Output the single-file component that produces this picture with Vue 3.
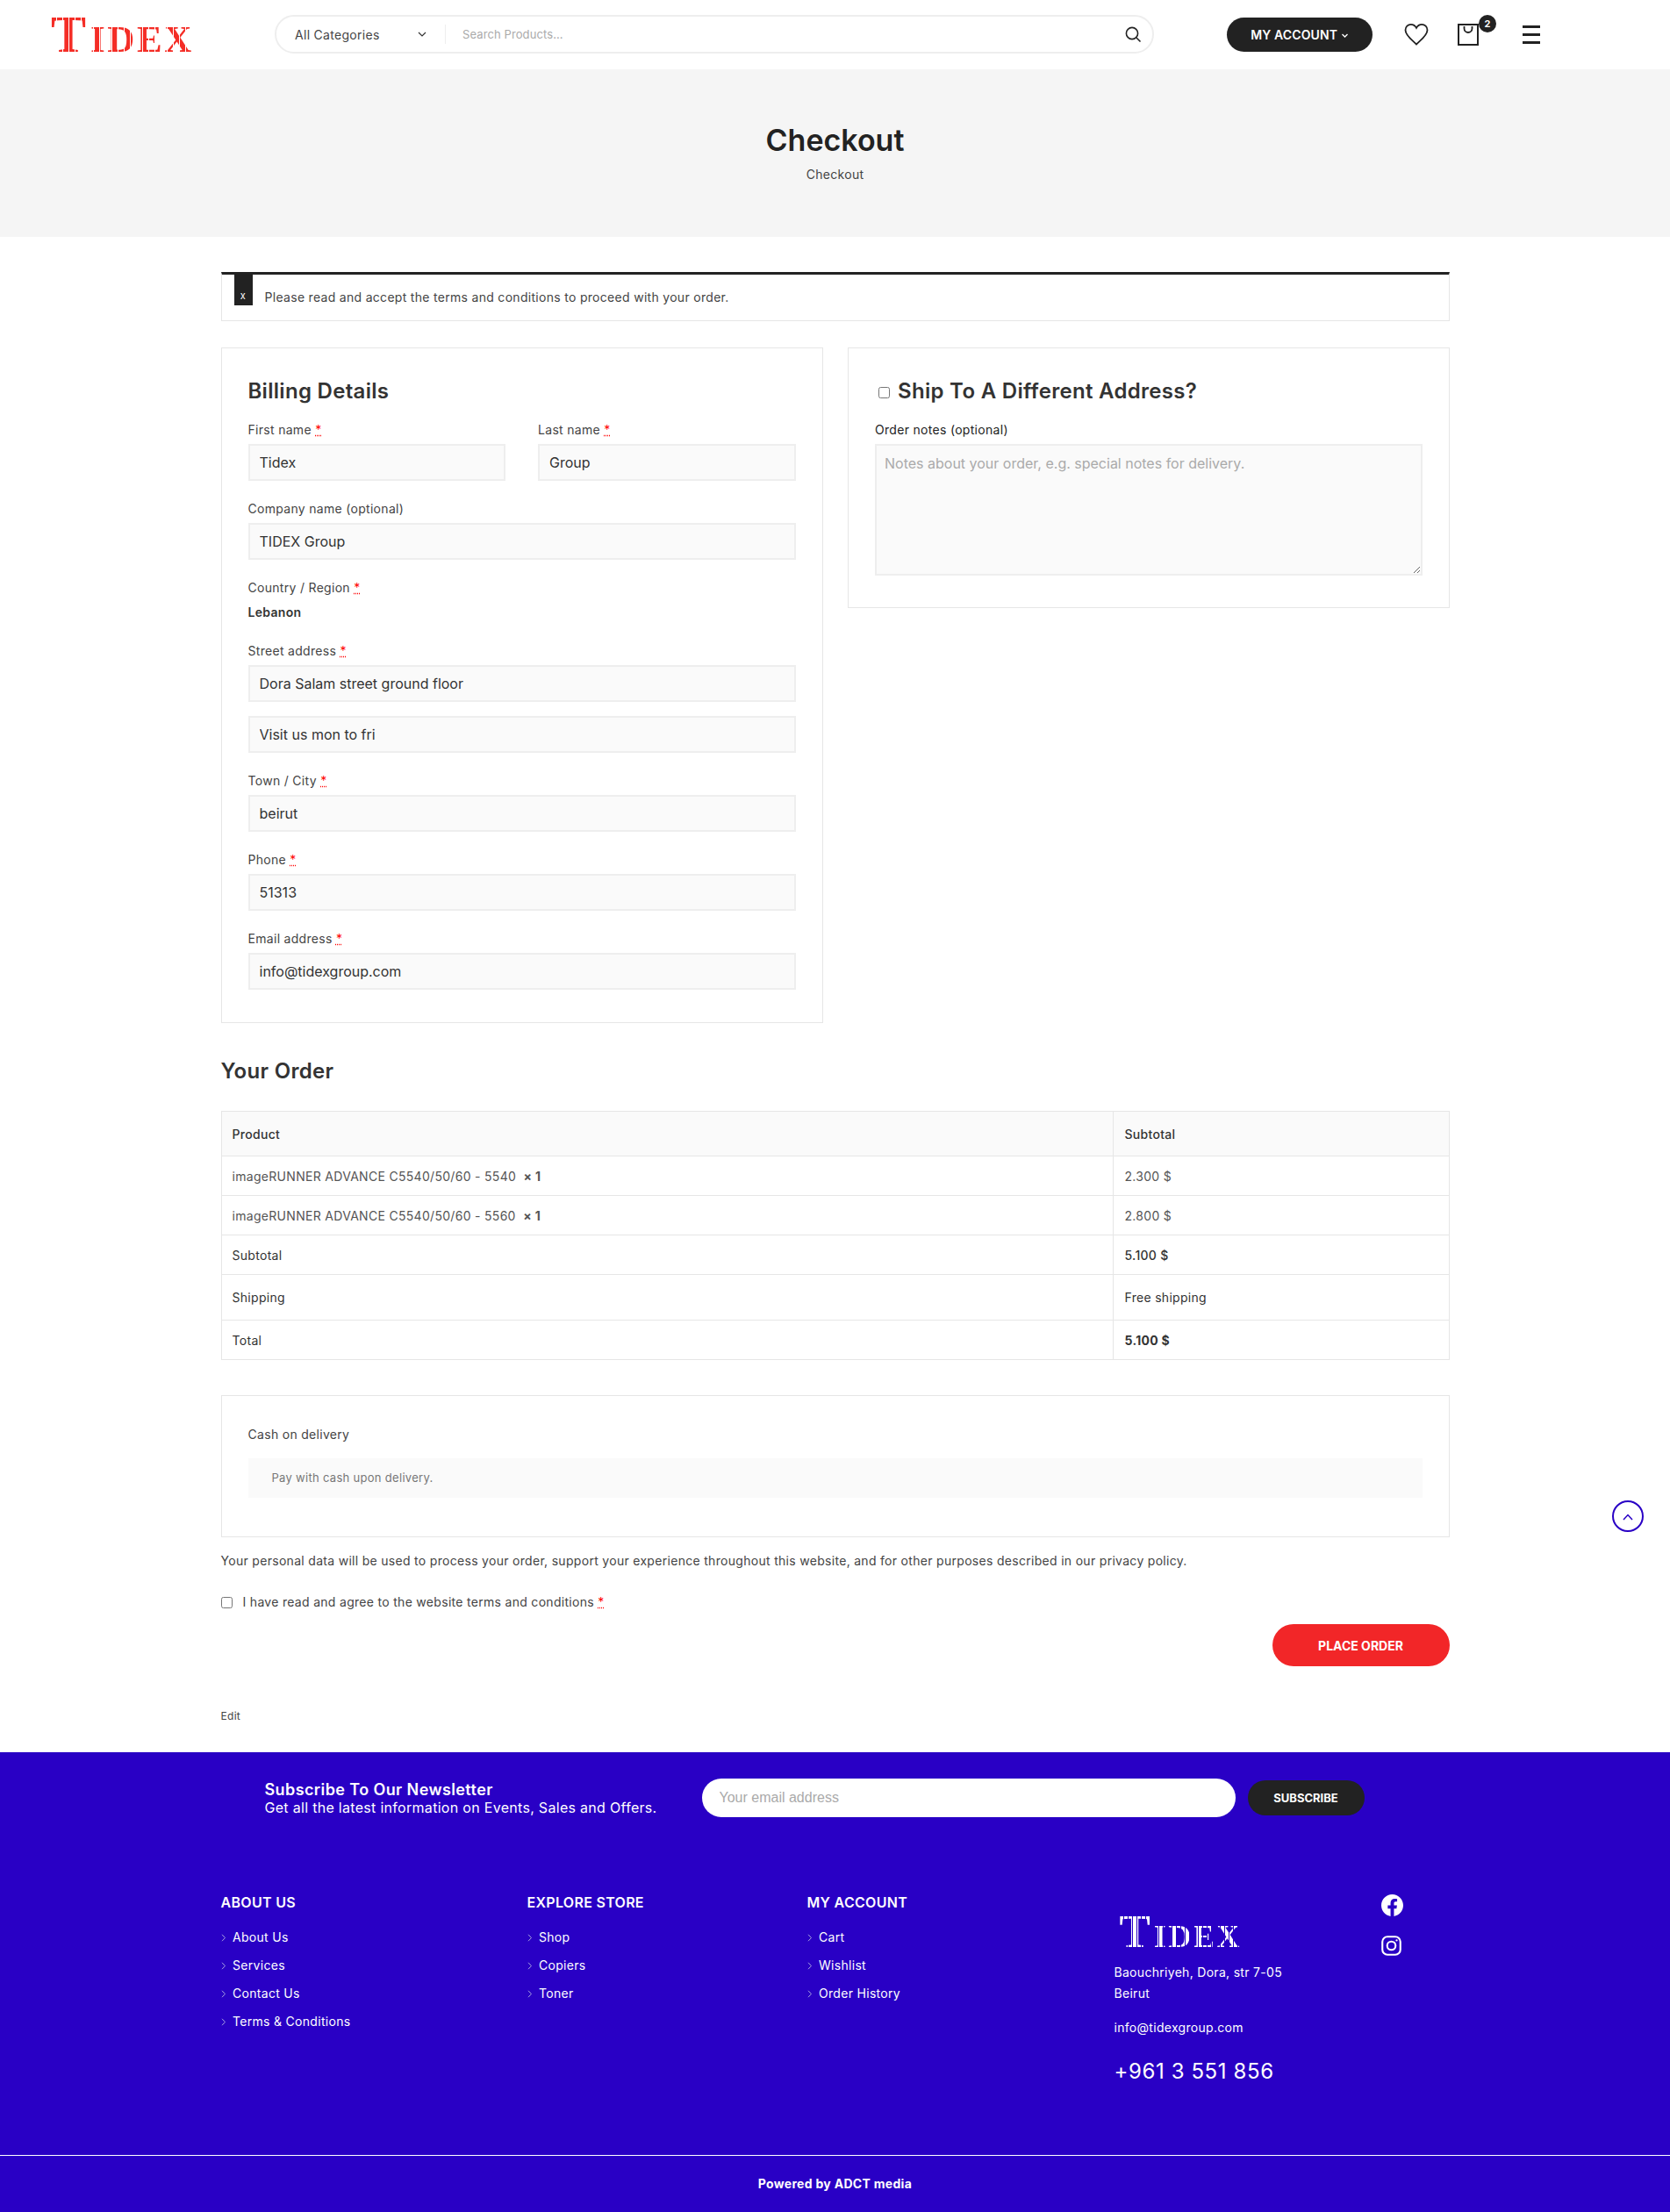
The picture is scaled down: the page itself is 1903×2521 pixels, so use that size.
<script setup>
const topFields = [
  { label: 'Company name (optional)', value: 'TIDEX Group' },
]
const lowerFields = [
  { label: 'Town / City', value: 'beirut' },
  { label: 'Phone', value: '51313' },
  { label: 'Email address', value: 'info@tidexgroup.com' },
]
const rows = [
  { name: 'imageRUNNER ADVANCE C5540/50/60 - 5540', price: '2.300 $' },
  { name: 'imageRUNNER ADVANCE C5540/50/60 - 5560', price: '2.800 $' },
]
const footerCols = [
  { title: 'ABOUT US', links: ['About Us', 'Services', 'Contact Us', 'Terms & Conditions'] },
  { title: 'EXPLORE STORE', links: ['Shop', 'Copiers', 'Toner'] },
  { title: 'MY ACCOUNT', links: ['Cart', 'Wishlist', 'Order History'] },
]
</script>

<template>
  <div class="page">
    <header class="topbar">
      <div class="logo-cell"><div class="logo"><span class="big">T</span>IDEX</div></div>
      <div class="search">
        <div class="cat">
          <span>All Categories</span>
          <svg width="12" height="12" viewBox="0 0 12 12"><path d="M2 4l4 4 4-4" fill="none" stroke="#333" stroke-width="1.2" /></svg>
        </div>
        <input class="search-input" type="text" placeholder="Search Products..." />
        <svg class="search-icon" width="20" height="20" viewBox="0 0 20 20" fill="none" stroke="#222" stroke-width="1.6">
          <circle cx="9" cy="9" r="6.6" />
          <path d="M14 14l4.5 4.5" />
        </svg>
      </div>
      <button class="account">MY ACCOUNT
        <svg width="9" height="9" viewBox="0 0 12 12"><path d="M2 4l4 4 4-4" fill="none" stroke="#fff" stroke-width="1.8" /></svg>
      </button>
      <svg class="heart" width="28" height="26" viewBox="0 0 28 26" fill="none" stroke="#222" stroke-width="1.8">
        <path d="M14 24.500C9 19.500 1.500 14.500 1.500 8.300 1.500 4.500 4.400 1.800 7.700 1.800c2.700 0 5 1.500 6.300 4 1.300-2.500 3.600-4 6.300-4 3.300 0 6.200 2.700 6.200 6.500C26.500 14.500 19 19.500 14 24.500z" />
      </svg>
      <div class="cart">
        <svg width="24" height="25" viewBox="0 0 24 25" fill="none" stroke="#222">
          <rect x="1" y="1" width="22" height="23" stroke-width="2" />
          <path d="M7.500 3v2.500a4.500 4.500 0 0 0 9 0V3" stroke-width="1.800" />
        </svg>
        <span class="badge">2</span>
      </div>
      <div class="burger"><i></i><i></i><i></i></div>
    </header>

    <section class="banner">
      <h1>Checkout</h1>
      <div class="crumb">Checkout</div>
    </section>

    <main class="wrap">
      <div class="notice">
        <span class="close">x</span>
        <span class="notice-text">Please read and accept the terms and conditions to proceed with your order.</span>
      </div>

      <div class="columns">
        <section class="box billing">
          <h3>Billing Details</h3>
          <div class="pair">
            <div class="field">
              <label>First name <abbr title="required">*</abbr></label>
              <input type="text" value="Tidex" />
            </div>
            <div class="field">
              <label>Last name <abbr title="required">*</abbr></label>
              <input type="text" value="Group" />
            </div>
          </div>
          <div class="field" v-for="f in topFields" :key="f.label">
            <label>{{ f.label }}</label>
            <input type="text" :value="f.value" />
          </div>
          <div class="field">
            <label>Country / Region <abbr title="required">*</abbr></label>
            <strong class="country">Lebanon</strong>
          </div>
          <div class="field">
            <label>Street address <abbr title="required">*</abbr></label>
            <input type="text" value="Dora Salam street ground floor" />
            <input class="second" type="text" value="Visit us mon to fri" />
          </div>
          <div class="field" v-for="f in lowerFields" :key="f.label">
            <label>{{ f.label }} <abbr title="required">*</abbr></label>
            <input type="text" :value="f.value" />
          </div>
        </section>

        <section class="box ship">
          <h3><input type="checkbox" class="ship-check" />Ship To A Different Address?</h3>
          <div class="field">
            <label class="dark">Order notes (optional)</label>
            <textarea placeholder="Notes about your order, e.g. special notes for delivery."></textarea>
          </div>
        </section>
      </div>

      <h3 class="order-title">Your Order</h3>
      <table class="order">
        <thead>
          <tr><th>Product</th><th>Subtotal</th></tr>
        </thead>
        <tbody>
          <tr v-for="r in rows" :key="r.name" class="item">
            <td class="muted">{{ r.name }}&nbsp; <strong>× 1</strong></td>
            <td class="muted">{{ r.price }}</td>
          </tr>
        </tbody>
        <tfoot>
          <tr><td>Subtotal</td><td class="medium">5.100 $</td></tr>
          <tr class="tall"><td>Shipping</td><td>Free shipping</td></tr>
          <tr><td>Total</td><td><strong>5.100 $</strong></td></tr>
        </tfoot>
      </table>

      <div class="payment">
        <div class="pay-name">Cash on delivery</div>
        <div class="pay-note">Pay with cash upon delivery.</div>
      </div>

      <p class="privacy">Your personal data will be used to process your order, support your experience throughout this website, and for other purposes described in our privacy policy.</p>
      <div class="terms">
        <input type="checkbox" />
        <span>I have read and agree to the website terms and conditions <abbr title="required">*</abbr></span>
      </div>
      <div class="place-row"><button class="place">PLACE ORDER</button></div>
      <div class="edit">Edit</div>
    </main>

    <footer class="footer">
      <div class="wrap">
        <div class="news">
          <div class="news-text">
            <div class="news-title">Subscribe To Our Newsletter</div>
            <div class="news-sub">Get all the latest information on Events, Sales and Offers.</div>
          </div>
          <input class="news-input" type="text" placeholder="Your email address" />
          <button class="news-btn">SUBSCRIBE</button>
        </div>

        <div class="foot-grid">
          <div v-for="c in footerCols" :key="c.title">
            <h4>{{ c.title }}</h4>
            <ul>
              <li v-for="l in c.links" :key="l">
                <svg width="6" height="9" viewBox="0 0 6 9"><path d="M1 .8l3.500 3.700L1 8.200" fill="none" stroke="#a99fe0" stroke-width="1" /></svg>
                {{ l }}
              </li>
            </ul>
          </div>
          <div class="contact">
            <div class="logo logo-white"><span class="big">T</span>IDEX</div>
            <div>Baouchriyeh, Dora, str 7-05</div>
            <div>Beirut</div>
            <div class="mail">info@tidexgroup.com</div>
            <div class="phone">+961 3 551 856</div>
          </div>
          <div class="social">
            <svg width="25" height="25" viewBox="0 0 24 24" fill="#fff">
              <path d="M24 12.073c0-6.627-5.373-12-12-12s-12 5.373-12 12c0 5.990 4.388 10.954 10.125 11.854v-8.385H7.078v-3.470h3.047V9.430c0-3.007 1.792-4.669 4.533-4.669 1.312 0 2.686.235 2.686.235v2.953H15.830c-1.491 0-1.956.925-1.956 1.874v2.250h3.328l-.532 3.470h-2.796v8.385C19.612 23.027 24 18.062 24 12.073z" />
            </svg>
            <svg width="23" height="23" viewBox="0 0 24 24" fill="none" stroke="#fff" stroke-width="2.200">
              <rect x="1.300" y="1.300" width="21.400" height="21.400" rx="6" />
              <circle cx="12" cy="12" r="5" />
              <circle cx="18.300" cy="5.700" r="1.200" fill="#fff" stroke="none" />
            </svg>
          </div>
        </div>
      </div>
      <div class="powered">Powered by ADCT media</div>
    </footer>

    <button class="to-top">
      <svg width="12" height="8" viewBox="0 0 12 8"><path d="M1 7l5-5.500L11 7" fill="none" stroke="#2900c5" stroke-width="1.500" /></svg>
    </button>
  </div>
</template>

<style scoped>
.page {
  position: relative;
  font-family: Inter, "Noto Sans", sans-serif;
  font-size: 14px;
  letter-spacing: 0.3px;
  color: #444;
  background: #fff;
}

.topbar {
  height: 79px;
  display: flex;
  align-items: center;
  padding-left: 58px;
  padding-bottom: 1px;
  box-sizing: border-box;
}
.logo-cell { width: 255px; flex: none; }
/* stripes cut through the letters, like the inline lines of the wordmark */
.logo {
  width: max-content;
  height: 40px;
  font-family: "Liberation Serif", serif;
  font-weight: 700;
  font-size: 43px;
  letter-spacing: 2.600px;
  line-height: 51px;
  color: transparent;
  background: repeating-linear-gradient(90deg, #f42d26 0 6px, transparent 6px 7px);
  -webkit-background-clip: text;
  background-clip: text;
}
.logo .big { font-size: 60px; letter-spacing: 5px; line-height: 0; }
.logo-white {
  height: 35px;
  margin: 28px 0 17px 6px;
  font-size: 36px;
  letter-spacing: 2.500px;
  line-height: 46px;
  background: repeating-linear-gradient(90deg, #fff 0 4px, transparent 4px 5px);
  -webkit-background-clip: text;
  background-clip: text;
}
.logo-white .big { font-size: 53px; letter-spacing: 4px; }

.search {
  width: 1002px;
  height: 44px;
  flex: none;
  box-sizing: border-box;
  border: 2px solid #eee;
  border-radius: 22px;
  display: flex;
  align-items: center;
  padding-left: 21px;
  padding-right: 12px;
}
.cat {
  width: 172px;
  height: 22px;
  flex: none;
  display: flex;
  justify-content: space-between;
  align-items: center;
  padding-right: 20px;
  box-sizing: border-box;
  border-right: 1px solid #eee;
  font-size: 14px;
}
.search-input {
  flex: 1;
  border: 0;
  outline: 0;
  background: none;
  padding: 0 0 0 19px;
  font-family: Inter, sans-serif;
  font-size: 13px;
  letter-spacing: 0.1px;
}
.search-input::placeholder { color: #aaa; }

.account {
  margin-left: 83px;
  width: 166px;
  height: 39px;
  flex: none;
  border: 0;
  border-radius: 20px;
  background: #222;
  color: #fff;
  font-family: Inter, sans-serif;
  font-size: 14px;
  font-weight: 600;
  letter-spacing: 0.1px;
}
.heart { margin-left: 36px; flex: none; }
.cart { margin-left: 33px; position: relative; height: 25px; flex: none; }
.badge {
  position: absolute;
  left: 24px;
  top: -10px;
  width: 20px;
  height: 20px;
  border-radius: 50%;
  background: #222;
  color: #fff;
  font-size: 11px;
  font-weight: 700;
  line-height: 20px;
  text-align: center;
}
.burger {
  margin-left: 50px;
  width: 20px;
  display: flex;
  flex-direction: column;
  gap: 6px;
}
.burger i { display: block; height: 3px; background: #222; }

.banner {
  height: 191px;
  box-sizing: border-box;
  padding-top: 61px;
  background: #f5f5f5;
  text-align: center;
}
.banner h1 {
  margin: 0;
  font-size: 34px;
  line-height: 40px;
  font-weight: 600;
  letter-spacing: 0;
  color: #222;
}
.crumb {
  margin-top: 9px;
  font-size: 14px;
  line-height: 20px;
}

.wrap { width: 1400px; margin: 0 auto; }
main.wrap { padding-top: 40px; padding-bottom: 31px; }

.notice {
  height: 56px;
  box-sizing: border-box;
  display: flex;
  border: 1px solid #e6e6e6;
  border-top: 3px solid #222;
  padding-left: 14px;
}
.close {
  width: 21px;
  height: 35px;
  background: #222;
  color: #fff;
  font-size: 11px;
  text-align: center;
  line-height: 49px;
  overflow: hidden;
}
.notice-text {
  margin-left: 14px;
  margin-top: 14px;
  line-height: 24px;
}

.columns {
  margin-top: 30px;
  display: grid;
  grid-template-columns: 686px 685.500px;
  gap: 28.500px;
  align-items: start;
}
.box {
  border: 1px solid #e6e6e6;
  padding: 30px 30px 36px;
}
.billing { padding-bottom: 37px; }
h3 {
  margin: 0 0 14px;
  font-size: 24px;
  line-height: 36px;
  font-weight: 600;
  color: #333;
}
.box h3 { padding-top: 1px; margin-bottom: 13px; }
.ship h3 { display: flex; align-items: center; }
.ship-check {
  width: 13px;
  height: 13px;
  margin: 2px 9px 0 4px;
}
.pair {
  display: grid;
  grid-template-columns: 293px 1fr;
  gap: 37.500px;
}
.field { margin-bottom: 19px; }
.box > .field:last-child { margin-bottom: 0; }
.field label {
  display: block;
  line-height: 26px;
  margin-bottom: 3px;
}
.field label.dark { color: #222; }
abbr { color: #f00; text-decoration: underline dotted; }
.field input, .field textarea {
  display: block;
  width: 100%;
  height: 42px;
  box-sizing: border-box;
  border: 2px solid #eee;
  border-radius: 0;
  outline: 0;
  background: #fafafa;
  padding: 0 11px;
  font-family: Inter, sans-serif;
  font-size: 16px;
  color: #333;
}
.field input.second { margin-top: 16px; }
.field textarea {
  height: 150px;
  padding: 10px 9px;
}
.field textarea::placeholder { color: #aaa; }
.country {
  display: block;
  line-height: 24px;
  font-weight: 600;
  color: #333;
}

.order-title { margin: 37px 0 27px; }

.order {
  width: 100%;
  border-collapse: collapse;
  border: 1px solid #e6e6e6;
  table-layout: fixed;
  color: #333;
}
.order th, .order td {
  box-sizing: border-box;
  border: 1px solid #e6e6e6;
  padding: 0 13px;
  text-align: left;
  font-weight: 400;
  height: 45px;
}
.order th:first-child, .order td:first-child { padding-left: 12px; }
.order th:first-child { width: 1016px; }
.order th { height: 51px; background: #fafafa; font-weight: 500; }
.order .tall td { height: 52px; }
.order strong { font-weight: 700; }
.order .medium { font-weight: 500; }
.order .muted { color: #555; }

.payment {
  margin-top: 40px;
  height: 162px;
  box-sizing: border-box;
  border: 1px solid #e6e6e6;
  padding: 32px 30px 0;
}
.pay-name { line-height: 24px; }
.pay-note {
  margin-top: 15px;
  height: 45px;
  padding-left: 27px;
  background: #fafafa;
  color: #777;
  font-size: 13px;
  line-height: 45px;
}
.privacy {
  margin: 15px 0 0;
  line-height: 24px;
}
.terms {
  margin-top: 23px;
  display: flex;
  align-items: center;
  line-height: 24px;
}
.terms input { width: 13px; height: 13px; margin: 0 12px 0 0; }
.place-row { margin-top: 13px; display: flex; justify-content: flex-end; }
.place {
  width: 202px;
  height: 48px;
  border: 0;
  border-radius: 24px;
  background: #f22628;
  color: #fff;
  font-family: Inter, sans-serif;
  font-size: 14px;
  font-weight: 700;
}
.edit {
  margin-top: 47px;
  font-size: 12px;
  line-height: 20px;
}

.footer {
  background: #2900c5;
  color: #fff;
  padding-top: 30px;
}
.news {
  display: flex;
  align-items: center;
  padding-left: 50px;
}
.news-text {
  width: 498px;
  flex: none;
  padding-top: 2px;
  line-height: 21px;
  font-size: 16px;
}
.news-title { font-size: 18px; font-weight: 600; letter-spacing: 0.4px; }
.news-input {
  width: 608px;
  height: 44px;
  flex: none;
  box-sizing: border-box;
  border: 0;
  outline: 0;
  border-radius: 22px;
  background: #fff;
  padding: 0 20px;
  font-family: "Liberation Sans", sans-serif;
  font-size: 16px;
}
.news-input::placeholder { color: #aaa; }
.news-btn {
  margin-left: 14px;
  width: 133px;
  height: 40px;
  border: 0;
  border-radius: 20px;
  background: #222;
  color: #fff;
  font-family: Inter, sans-serif;
  font-size: 13px;
  font-weight: 700;
}
.foot-grid {
  margin-top: 85px;
  height: 300px;
  display: grid;
  grid-template-columns: 349px 319px 350px 303px 1fr;
}
h4 {
  margin: 0 0 12px;
  font-size: 16px;
  line-height: 24px;
  font-weight: 600;
}
ul { list-style: none; margin: 0; padding: 0; }
li {
  display: flex;
  align-items: center;
  gap: 7.500px;
  line-height: 32px;
}
.contact { line-height: 24px; }
.mail { margin-top: 15px; }
.phone {
  margin-top: 20px;
  font-size: 24px;
  letter-spacing: 0.6px;
  line-height: 36px;
}
.social {
  display: flex;
  flex-direction: column;
  align-items: flex-start;
  gap: 22px;
  padding-top: 3px;
  padding-left: 1px;
}
.powered {
  border-top: 1px solid #fff;
  height: 65px;
  line-height: 63px;
  text-align: center;
  font-weight: 700;
}

.to-top {
  position: absolute;
  right: 30px;
  top: 1710px;
  width: 36px;
  height: 36px;
  border: 2px solid #2900c5;
  border-radius: 50%;
  background: #fff;
  padding: 0;
}
</style>
